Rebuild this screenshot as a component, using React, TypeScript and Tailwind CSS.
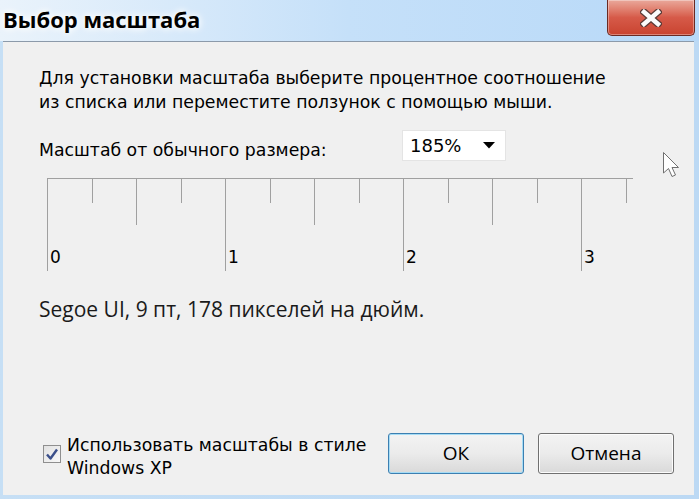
import React from 'react';

const uiFont = "font-['DejaVu_Sans',sans-serif]";
const segoeFont = "font-['Open_Sans','Noto_Sans',sans-serif]";

const Ruler = () => {
  const ticks = Array.from({ length: 14 }, (_, k) => k);
  return (
    <svg width="600" height="100" className="block">
      <line x1="7" y1="4.5" x2="593" y2="4.5" stroke="#a0a0a0" strokeWidth="1" />
      {ticks.map((k) => {
        const x = Math.round(7 + k * 44.5) + 0.5;
        const len = k % 4 === 0 ? 97 : k % 2 === 0 ? 51 : 29;
        return <line key={k} x1={x} y1="4" x2={x} y2={len} stroke="#a0a0a0" strokeWidth="1" />;
      })}
      {[0, 1, 2, 3].map((n) => (
        <text
          key={n}
          x={7 + n * 178 + 3}
          y="89"
          fontFamily="DejaVu Sans, sans-serif"
          fontSize="17"
          fill="#000"
        >
          {n}
        </text>
      ))}
    </svg>
  );
};

const Cursor = () => (
  <svg width="22" height="30" viewBox="0 0 22 30" className="absolute left-[662px] top-[151px]">
    <path
      d="M1.5 1.5 L1.5 22 L6.5 17.5 L10 25.5 L13.5 24 L10 16.5 L16.5 16.5 Z"
      fill="#fff"
      stroke="#707070"
      strokeWidth="1"
      strokeLinejoin="round"
    />
  </svg>
);

const CloseButton = () => (
  <div className="w-[88px] h-[36px] rounded-b-[5px] border border-t-0 border-[#6b2a22] bg-gradient-to-b from-[#e9a89b] via-[#d65a49] to-[#c9432f] flex items-center justify-center shadow-[inset_0_0_0_1px_rgba(255,255,255,0.35)]">
    <svg width="22" height="18" viewBox="0 0 22 18">
      <path d="M4 3 L18 15 M18 3 L4 15" stroke="#5a3a36" strokeWidth="7" strokeLinecap="square" />
      <path d="M4 3 L18 15 M18 3 L4 15" stroke="#fbfbfb" strokeWidth="4.5" strokeLinecap="square" />
    </svg>
  </div>
);

const Button = ({ label, focused }: { label: string; focused?: boolean }) => (
  <div
    className={`w-[136px] h-[41px] rounded-[3px] border flex items-center justify-center text-[19px] text-black bg-gradient-to-b from-[#f3f3f3] via-[#ebebeb] to-[#d9d9d9] ${segoeFont} ${
      focused ? 'border-[#3c7fb1] shadow-[inset_0_0_0_1px_#a6dcf5]' : 'border-[#707070] shadow-[inset_0_0_0_1px_#fcfcfc]'
    }`}
  >
    {label}
  </div>
);

export default function App() {
  return (
    <div className="w-[699px] h-[499px] relative flex flex-col bg-gradient-to-r from-[#c6dff5] to-[#bcd9f4] overflow-hidden">
      <div className="h-[41px] flex items-start justify-between bg-gradient-to-r from-[#eaf3fb] via-[#c5e0f9] to-[#b8d9f8]">
        <div
          className={`pl-[3px] pt-[4px] text-[22px] font-bold text-black leading-[30px] ${segoeFont} [text-shadow:0_0_10px_#ffffff,0_0_6px_#ffffff]`}
        >
          Выбор масштаба
        </div>
        <div className="pr-[4px]">
          <CloseButton />
        </div>
      </div>

      <div className="flex-1 flex flex-col ml-[3px] mr-[5px] mb-[4px] bg-[#f0f0f0] border-t border-[#8c9aaa] pl-[36px] pt-[24px] pb-[15px]">
        <p className={`text-[17.3px] leading-[24px] text-black ${uiFont}`}>
          Для установки масштаба выберите процентное соотношение
          <br />
          из списка или переместите ползунок с помощью мыши.
        </p>

        <div className="flex items-center mt-[14px]">
          <div className={`w-[363px] text-[17.3px] text-black pt-[10px] ${uiFont}`}>Масштаб от обычного размера:</div>
          <div className="w-[104px] h-[31px] bg-white border border-[#e4e4e4] flex items-center justify-between pl-[7px] pr-[10px]">
            <span className={`text-[18px] text-black ${uiFont}`}>185%</span>
            <svg width="12" height="7" viewBox="0 0 12 7">
              <path d="M0 0 L12 0 L6 6.5 Z" fill="#000" />
            </svg>
          </div>
        </div>

        <div className="mt-[10px] ml-[1px]">
          <Ruler />
        </div>

        <div className={`mt-[21px] text-[21px] leading-[28px] text-[#1a1a1a] ${segoeFont}`}>
          Segoe UI, 9 пт, 178 пикселей на дюйм.
        </div>

        <div className="mt-auto flex items-start">
          <div className="flex items-start">
            <div className="mt-[11px] ml-[4px] w-[18px] h-[18px] border border-[#8f8f8f] bg-gradient-to-br from-[#e2e2e2] to-[#f8f8f8] flex items-center justify-center">
              <svg width="14" height="13" viewBox="0 0 14 13">
                <path d="M2 6.5 L5.5 10.5 L12 1.5" fill="none" stroke="#3b4f8a" strokeWidth="2.4" strokeLinejoin="round" />
              </svg>
            </div>
            <div className={`ml-[6px] text-[17.3px] leading-[23px] text-black ${uiFont}`}>
              Использовать масштабы в стиле
              <br />
              Windows XP
            </div>
          </div>
          <div className="ml-auto flex gap-[14px] mr-[20px] mt-[-1px]">
            <Button label="ОК" focused />
            <Button label="Отмена" />
          </div>
        </div>
      </div>

      <Cursor />
    </div>
  );
}
